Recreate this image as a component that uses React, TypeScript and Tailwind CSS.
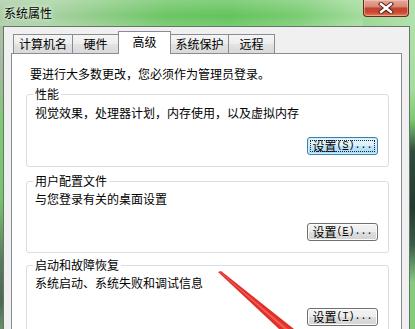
import React from "react";

function WinButton({ k, focused }: { k: string; focused?: boolean }) {
  const label = (
    <span className="flex items-center whitespace-nowrap">
      <span>设置</span>
      <span className="font-['Liberation_Mono',monospace] text-[10px] leading-[16px]">
        (<span className="underline underline-offset-[1px]">{k}</span>)...
      </span>
    </span>
  );
  if (focused) {
    return (
      <div className="self-end mr-[10px] w-[71px] h-[18px] rounded-[3px] border border-[#3c7fb1] bg-[linear-gradient(180deg,#eaf6fd_0%,#d9f0fc_50%,#bee6fd_51%,#a7d9f5_100%)] shadow-[inset_0_0_0_1px_#cdeefd] p-[2px] flex">
        <div className="flex-1 border border-dotted border-[#222] flex items-center justify-center">
          {label}
        </div>
      </div>
    );
  }
  return (
    <div className="self-end mr-[10px] w-[71px] h-[18px] rounded-[3px] border border-[#707070] bg-[linear-gradient(180deg,#f4f4f4_0%,#ececec_50%,#dfdfdf_51%,#d2d2d2_100%)] shadow-[inset_0_0_0_1px_#fcfcfc] flex items-center justify-center">
      {label}
    </div>
  );
}

function Group({
  title,
  text,
  k,
  focused,
  mt,
  textMt,
  btnMt,
}: {
  title: string;
  text: string;
  k: string;
  focused?: boolean;
  mt: string;
  textMt: string;
  btnMt: string;
}) {
  return (
    <fieldset
      className={`${mt} ml-[14px] w-[363px] border border-[#d5dfe5] rounded-[3px] pl-[6px] pb-[11px] flex flex-col`}
    >
      <legend className="px-[2px] leading-[16px]">{title}</legend>
      <div className={`${textMt} pl-[2px] whitespace-nowrap`}>{text}</div>
      <div className={`${btnMt} flex flex-col`}>
        <WinButton k={k} focused={focused} />
      </div>
    </fieldset>
  );
}

function Tab({ label, w, selected, first }: { label: string; w: string; selected?: boolean; first?: boolean }) {
  if (selected) {
    return (
      <div
        className={`${w} -ml-px h-[23px] mb-[-1px] relative z-10 bg-white border-t border-l border-r border-[#898c95] flex items-start justify-center pt-[2px] whitespace-nowrap`}
      >
        {label}
      </div>
    );
  }
  return (
    <div
      className={`${w} ${first ? "" : "-ml-px"} h-[19px] border-t border-l border-r border-[#898c95] bg-[linear-gradient(180deg,#f5f5f5_0%,#ededed_50%,#e3e3e3_51%,#d9d9d9_100%)] flex items-center justify-center whitespace-nowrap`}
    >
      {label}
    </div>
  );
}

export default function App() {
  return (
    <div className="relative w-[415px] h-[329px] overflow-hidden flex flex-col font-['Noto_Sans_CJK_SC','Noto_Sans',sans-serif] text-[12px] leading-[16px] text-black bg-[#7fcf77]">
      {/* title bar */}
      <div className="h-[26px] shrink-0 flex justify-between items-start bg-[linear-gradient(90deg,#a6c9a0_0%,#a3cf9c_12%,#86c97e_25%,#64c25c_40%,#5bc053_55%,#72c96a_72%,#9bd894_86%,#b3e2ae_100%)]">
        <div className="relative h-full flex-1 flex items-center pl-[4px] bg-[linear-gradient(180deg,rgba(255,255,255,0.25)_0%,rgba(255,255,255,0.05)_60%,rgba(255,255,255,0.18)_100%)]">
          <span className="[text-shadow:0_0_6px_#e8f8e4,0_0_3px_#e8f8e4]">系统属性</span>
        </div>
        <div className="w-[46px] h-[17px] mr-[6px] rounded-b-[4px] border border-t-0 border-[#6a2a20] bg-[linear-gradient(180deg,#e8a899_0%,#d98a7a_40%,#c4432c_52%,#c9482e_75%,#e07a58_100%)] shadow-[inset_0_0_0_1px_rgba(255,220,210,0.45)] flex items-center justify-center">
          <svg width="16" height="12" viewBox="0 0 16 12">
            <path d="M3 2 L13 10 M13 2 L3 10" stroke="#4a1810" strokeWidth="4.2" strokeLinecap="square" />
            <path d="M3 2 L13 10 M13 2 L3 10" stroke="#ffffff" strokeWidth="2.4" strokeLinecap="square" />
          </svg>
        </div>
      </div>

      {/* body row */}
      <div className="flex flex-1">
        <div className="w-[3px] shrink-0 bg-[linear-gradient(180deg,#a8c4a2_0%,#aab6a6_12%,#7fca76_30%,#78c46e_55%,#5a7a5c_75%,#4e6652_88%,#72a070_100%)]" />
        <div className="w-[407px] shrink-0 border-l border-t border-r border-[#66756a] bg-[#f0f0f0] pl-[7px] pt-[4px] flex flex-col">
          {/* tabs */}
          <div className="h-[22px] flex items-end ml-[2px] relative z-10">
            <Tab label="计算机名" w="w-[60px]" first />
            <Tab label="硬件" w="w-[47px]" />
            <Tab label="高级" w="w-[53px]" selected />
            <Tab label="系统保护" w="w-[59px]" />
            <Tab label="远程" w="w-[47px]" />
          </div>
          {/* tab page */}
          <div className="w-[391px] flex-1 border border-[#898c95] bg-white pt-[12px] flex flex-col">
            <div className="pl-[18px] whitespace-nowrap">要进行大多数更改，您必须作为管理员登录。</div>
            <Group
              title="性能"
              text="视觉效果，处理器计划，内存使用，以及虚拟内存"
              k="S"
              focused
              mt="mt-[4px]"
              textMt="mt-[3px]"
              btnMt="mt-[16px]"
            />
            <Group
              title="用户配置文件"
              text="与您登录有关的桌面设置"
              k="E"
              mt="mt-[6px]"
              textMt="mt-[2px]"
              btnMt="mt-[16px]"
            />
            <Group
              title="启动和故障恢复"
              text="系统启动、系统失败和调试信息"
              k="T"
              mt="mt-[4px]"
              textMt="mt-[2px]"
              btnMt="mt-[17px]"
            />
          </div>
        </div>
        <div className="flex-1 bg-[linear-gradient(180deg,#b2e0aa_0%,#a6dc9e_20%,#7cc872_30%,#2f4c3e_40%,#243a30_58%,#3a5c48_70%,#88ca80_82%,#82cc7a_100%)]" />
      </div>

      {/* red annotation arrow */}
      <svg className="absolute left-0 top-0 pointer-events-none" width="415" height="329" viewBox="0 0 415 329">
        <polygon points="218,272 221,271 294,329 279,329" fill="#e0302a" />
        <polygon points="219.5,272 220.5,272 288,329 284,329" fill="#f25a52" />
      </svg>
    </div>
  );
}
